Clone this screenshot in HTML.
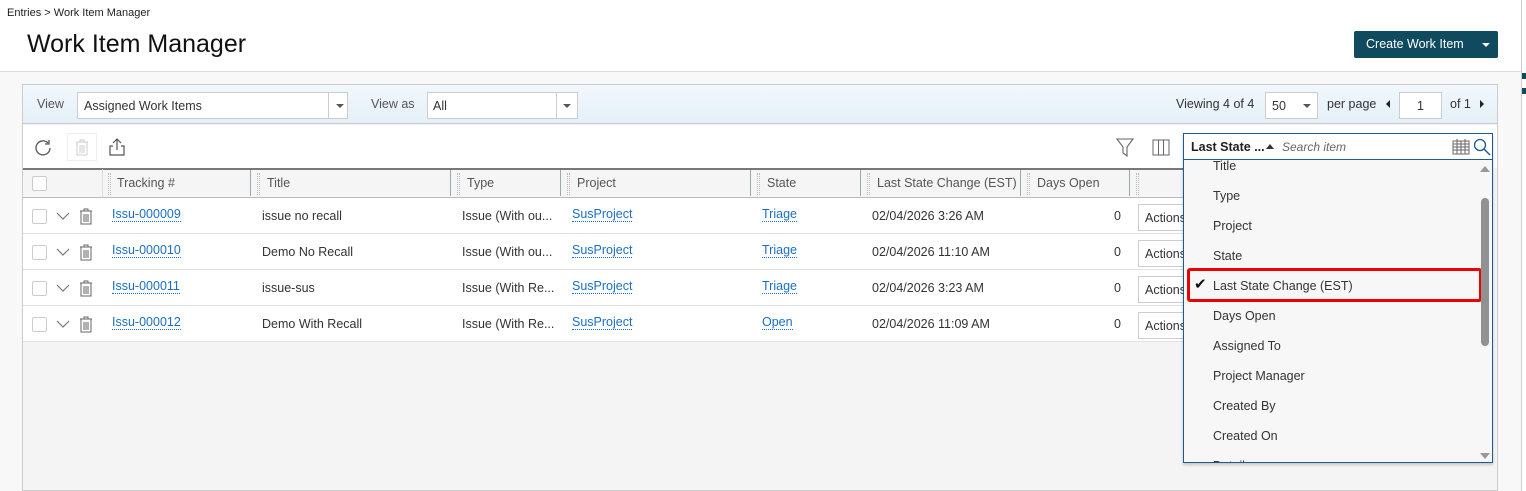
<!DOCTYPE html>
<html><head><meta charset="utf-8"><style>
*{box-sizing:border-box;margin:0;padding:0}
body{width:1526px;height:491px;overflow:hidden;background:#fff;font-family:"Liberation Sans",sans-serif;font-size:12.5px;color:#333;position:relative}
.a{position:absolute}
.hd{position:absolute;top:168px;height:30px;line-height:30px;color:#555;font-size:12.5px}
.grip{position:absolute;top:4px;width:3px;height:22px;border-left:1px dotted #bbb;border-right:1px dotted #bbb}
.sep{position:absolute;top:170px;width:1px;height:26px;background:#9aa}
.row{position:absolute;left:23px;width:1160px;height:36px;border-bottom:1px solid #e2e2e2;background:#fff}
.cb{position:absolute;width:15px;height:15px;border:1px solid #ccc;border-radius:2px;background:#fff}
.cell{position:absolute;top:11px;font-size:12.5px;color:#333;white-space:nowrap}
.cell.lnk{color:#1a6fc4;border-bottom:1px dotted #1a6fc4;line-height:14px}
.act{position:absolute;left:1115px;top:6px;width:60px;height:27px;border:1px solid #ccc;border-right:none;padding:6px 0 0 6px;font-size:12.5px;background:#fff}
.it{position:absolute;left:29px;font-size:12.5px;color:#333}
</style></head><body>
<div class="a" style="left:7px;top:7px;font-size:11px;color:#222">Entries &gt; Work Item Manager</div>
<div class="a" style="left:27px;top:30px;font-size:25px;color:#111">Work Item Manager</div>
<div class="a" style="left:1354px;top:31px;width:144px;height:27px;background:#0f4a5f;border-radius:2px;color:#fff;font-size:12.5px;line-height:27px;padding-left:12px">Create Work Item<span style="position:absolute;right:8px;top:12px;border:4px solid transparent;border-top:4px solid #fff;border-bottom:0"></span></div>
<div class="a" style="left:0;top:71px;width:1521px;height:420px;background:#f8f8f8;border-top:1px solid #ddd"></div>
<div class="a" style="left:1521px;top:0;width:1px;height:491px;background:#ccc"></div>
<div class="a" style="left:1522px;top:73px;width:4px;height:6px;background:#0f4a5f"></div>
<div class="a" style="left:1522px;top:88px;width:4px;height:6px;background:#0f4a5f"></div>
<div class="a" style="left:22px;top:84px;width:1476px;height:407px;background:#f4f4f4;border:1px solid #ccc"></div>
<div class="a" style="left:23px;top:85px;width:1474px;height:39px;background:linear-gradient(#f2f8fc,#e4f0f8);border-bottom:1px solid #ccc"></div>
<div class="a" style="left:37px;top:97px;color:#555">View</div>
<div class="a" style="left:77px;top:92px;width:271px;height:27px;background:#fff;border:1px solid #ccc;padding:6px 0 0 6px">Assigned Work Items<span style="position:absolute;left:250px;top:0;width:1px;height:25px;background:#ccc"></span><span style="position:absolute;left:258px;top:11px;border:4px solid transparent;border-top:4px solid #555;border-bottom:0"></span></div>
<div class="a" style="left:371px;top:97px;color:#555">View as</div>
<div class="a" style="left:427px;top:92px;width:151px;height:27px;background:#fff;border:1px solid #ccc;padding:6px 0 0 5px">All<span style="position:absolute;left:128px;top:0;width:1px;height:25px;background:#ccc"></span><span style="position:absolute;left:135px;top:11px;border:4px solid transparent;border-top:4px solid #555;border-bottom:0"></span></div>
<div class="a" style="left:1176px;top:97px;color:#333">Viewing 4 of 4</div>
<div class="a" style="left:1265px;top:92px;width:53px;height:27px;background:#fff;border:1px solid #ccc;padding:6px 0 0 6px">50<span style="position:absolute;left:37px;top:11px;border:4px solid transparent;border-top:4px solid #555;border-bottom:0"></span></div>
<div class="a" style="left:1327px;top:97px">per page</div>
<div class="a" style="left:1386px;top:100px;border:4px solid transparent;border-right:4px solid #222;border-left:0;height:0"></div>
<div class="a" style="left:1399px;top:92px;width:43px;height:27px;background:#fff;border:1px solid #ccc;text-align:center;padding-top:6px">1</div>
<div class="a" style="left:1450px;top:97px">of 1</div>
<div class="a" style="left:1480px;top:100px;border:4px solid transparent;border-left:4px solid #222;border-right:0;height:0"></div>
<div class="a" style="left:23px;top:125px;width:1474px;height:43px;background:#fff"></div>
<svg class="a" style="left:34px;top:138px" width="20" height="20" viewBox="0 0 20 20"><path d="M16 10a7 7 0 1 1-2-5" fill="none" stroke="#555" stroke-width="1.3"/><path d="M15 2v4h-4" fill="none" stroke="#555" stroke-width="1.3"/></svg>
<div class="a" style="left:67px;top:133px;width:30px;height:28px;border:1px solid #eee"></div>
<svg class="a" style="left:74px;top:139px" width="16" height="17" viewBox="0 0 16 17"><path d="M2 3h12M6 3V1h4v2M3 3v13h10V3M6 6v8M8 6v8M10 6v8" fill="none" stroke="#ccc"/></svg>
<svg class="a" style="left:107px;top:137px" width="20" height="20" viewBox="0 0 20 20"><path d="M10 13V2M6 6l4-4 4 4M6 9H3v9h14V9h-3" fill="none" stroke="#555" stroke-width="1.2"/></svg>
<svg class="a" style="left:1116px;top:138px" width="18" height="19" viewBox="0 0 18 19"><path d="M1 1h16l-6 8v9l-4-3V9z" fill="none" stroke="#666" stroke-width="1.1"/></svg>
<svg class="a" style="left:1152px;top:139px" width="18" height="17" viewBox="0 0 18 17"><rect x="1" y="1" width="16" height="15" fill="none" stroke="#666"/><path d="M6.5 1v15M11.5 1v15" stroke="#666"/></svg>
<div class="a" style="left:23px;top:168px;width:1160px;height:30px;background:#f5f5f5;border-top:2px solid #777;border-bottom:1px solid #bbb"></div>
<div class="cb" style="left:32px;top:176px"></div>
<div class="a" style="left:102px;top:169px;width:1px;height:28px;background:#ddd"></div>
<div class="grip" style="left:108px;top:173px"></div><div class="hd" style="left:117px">Tracking #</div>
<div class="sep" style="left:250px"></div><div class="grip" style="left:257px;top:173px"></div><div class="hd" style="left:267px">Title</div>
<div class="sep" style="left:450px"></div><div class="grip" style="left:457px;top:173px"></div><div class="hd" style="left:467px">Type</div>
<div class="sep" style="left:560px"></div><div class="grip" style="left:567px;top:173px"></div><div class="hd" style="left:577px">Project</div>
<div class="sep" style="left:750px"></div><div class="grip" style="left:757px;top:173px"></div><div class="hd" style="left:767px">State</div>
<div class="sep" style="left:860px"></div><div class="grip" style="left:867px;top:173px"></div><div class="hd" style="left:877px">Last State Change (EST)</div>
<div class="sep" style="left:1020px"></div><div class="grip" style="left:1027px;top:173px"></div><div class="hd" style="left:1037px">Days Open</div>
<div class="sep" style="left:1129px"></div><div class="grip" style="left:1136px;top:173px"></div>
<div class="row" style="top:198px"><div class="cb" style="left:9px;top:11px"></div><svg class="a" style="left:33px;top:14px" width="14" height="9" viewBox="0 0 14 9"><path d="M1 1l6 6 6-6" fill="none" stroke="#777" stroke-width="1.2"/></svg><svg class="a" style="left:56px;top:9px" width="14" height="18" viewBox="0 0 14 18"><path d="M1 4h12M5 4V2h4v2M2 4v13h10V4M5 7v8M7 7v8M9 7v8" fill="none" stroke="#666"/></svg><div class="cell lnk" style="left:89px;top:9px">Issu-000009</div><div class="cell" style="left:239px">issue no recall</div><div class="cell" style="left:439px">Issue (With ou...</div><div class="cell lnk" style="left:549px;top:9px">SusProject</div><div class="cell lnk" style="left:739px;top:9px">Triage</div><div class="cell" style="left:849px">02/04/2026 3:26 AM</div><div class="cell" style="left:1091px">0</div><div class="act">Actions</div></div>
<div class="row" style="top:234px"><div class="cb" style="left:9px;top:11px"></div><svg class="a" style="left:33px;top:14px" width="14" height="9" viewBox="0 0 14 9"><path d="M1 1l6 6 6-6" fill="none" stroke="#777" stroke-width="1.2"/></svg><svg class="a" style="left:56px;top:9px" width="14" height="18" viewBox="0 0 14 18"><path d="M1 4h12M5 4V2h4v2M2 4v13h10V4M5 7v8M7 7v8M9 7v8" fill="none" stroke="#666"/></svg><div class="cell lnk" style="left:89px;top:9px">Issu-000010</div><div class="cell" style="left:239px">Demo No Recall</div><div class="cell" style="left:439px">Issue (With ou...</div><div class="cell lnk" style="left:549px;top:9px">SusProject</div><div class="cell lnk" style="left:739px;top:9px">Triage</div><div class="cell" style="left:849px">02/04/2026 11:10 AM</div><div class="cell" style="left:1091px">0</div><div class="act">Actions</div></div>
<div class="row" style="top:270px"><div class="cb" style="left:9px;top:11px"></div><svg class="a" style="left:33px;top:14px" width="14" height="9" viewBox="0 0 14 9"><path d="M1 1l6 6 6-6" fill="none" stroke="#777" stroke-width="1.2"/></svg><svg class="a" style="left:56px;top:9px" width="14" height="18" viewBox="0 0 14 18"><path d="M1 4h12M5 4V2h4v2M2 4v13h10V4M5 7v8M7 7v8M9 7v8" fill="none" stroke="#666"/></svg><div class="cell lnk" style="left:89px;top:9px">Issu-000011</div><div class="cell" style="left:239px">issue-sus</div><div class="cell" style="left:439px">Issue (With Re...</div><div class="cell lnk" style="left:549px;top:9px">SusProject</div><div class="cell lnk" style="left:739px;top:9px">Triage</div><div class="cell" style="left:849px">02/04/2026 3:23 AM</div><div class="cell" style="left:1091px">0</div><div class="act">Actions</div></div>
<div class="row" style="top:306px"><div class="cb" style="left:9px;top:11px"></div><svg class="a" style="left:33px;top:14px" width="14" height="9" viewBox="0 0 14 9"><path d="M1 1l6 6 6-6" fill="none" stroke="#777" stroke-width="1.2"/></svg><svg class="a" style="left:56px;top:9px" width="14" height="18" viewBox="0 0 14 18"><path d="M1 4h12M5 4V2h4v2M2 4v13h10V4M5 7v8M7 7v8M9 7v8" fill="none" stroke="#666"/></svg><div class="cell lnk" style="left:89px;top:9px">Issu-000012</div><div class="cell" style="left:239px">Demo With Recall</div><div class="cell" style="left:439px">Issue (With Re...</div><div class="cell lnk" style="left:549px;top:9px">SusProject</div><div class="cell lnk" style="left:739px;top:9px">Open</div><div class="cell" style="left:849px">02/04/2026 11:09 AM</div><div class="cell" style="left:1091px">0</div><div class="act">Actions</div></div>
<div class="a" style="left:1183px;top:133px;width:310px;height:330px;background:#f7f7f7;border:1px solid #1a5a96;box-shadow:0 2px 3px rgba(0,0,0,.2);overflow:hidden">
 <div class="a" style="left:0;top:0;width:308px;height:26px;background:#fff;border-bottom:1px solid #1a5a96"></div>
 <div class="a" style="left:7px;top:6px;font-weight:bold;color:#222">Last State ...</div>
 <div class="a" style="left:82px;top:10px;border:4px solid transparent;border-bottom:5px solid #333;border-top:0"></div>
 <div class="a" style="left:98px;top:6px;font-style:italic;color:#666;font-size:12px">Search item</div>
 <svg class="a" style="left:268px;top:5px" width="18" height="16" viewBox="0 0 18 16"><rect x="1" y="2" width="16" height="13" fill="none" stroke="#666"/><path d="M1 5h16M1 8h16M1 11h16M5 2v13M9 2v13M13 2v13M5 0v3M13 0v3" stroke="#666"/></svg>
 <svg class="a" style="left:289px;top:4px" width="18" height="18" viewBox="0 0 18 18"><circle cx="7" cy="7" r="5.5" fill="none" stroke="#1a5a96" stroke-width="1.3"/><path d="M11 11l6 6" stroke="#1a5a96" stroke-width="1.4"/></svg>
 <div class="it" style="top:25px">Title</div>
 <div class="it" style="top:55px">Type</div>
 <div class="it" style="top:85px">Project</div>
 <div class="it" style="top:115px">State</div>
 <div class="a" style="left:3px;top:134px;width:295px;height:34px;border:3px solid #e00;border-radius:3px"></div>
 <div class="a" style="left:10px;top:141px;font-size:15px;color:#111">&#10004;</div>
 <div class="it" style="top:145px">Last State Change (EST)</div>
 <div class="it" style="top:175px">Days Open</div>
 <div class="it" style="top:205px">Assigned To</div>
 <div class="it" style="top:235px">Project Manager</div>
 <div class="it" style="top:265px">Created By</div>
 <div class="it" style="top:295px">Created On</div>
 <div class="it" style="top:325px">Details</div>
 <div class="a" style="left:296px;top:32px;border:5px solid transparent;border-bottom:6px solid #999;border-top:0"></div>
 <div class="a" style="left:297px;top:64px;width:8px;height:148px;background:#919191;border-radius:4px"></div>
 <div class="a" style="left:296px;top:319px;border:5px solid transparent;border-top:6px solid #999;border-bottom:0"></div>
</div>
</body></html>
